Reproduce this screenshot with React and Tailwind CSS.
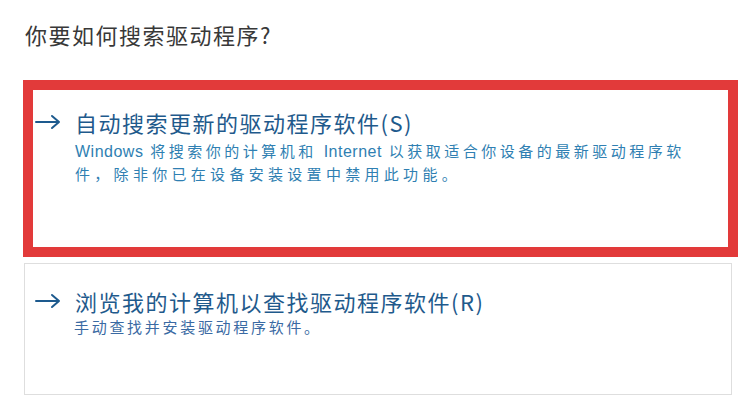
import React from "react";

const FONT = { fontFamily: '"Noto Sans CJK SC", "Noto Sans", sans-serif' };
const LATIN = { fontFamily: '"Liberation Sans", sans-serif' };

function Arrow() {
  return (
    <svg width="26" height="16" viewBox="0 0 26 16" className="shrink-0">
      <path d="M1 8 H24 M17 2 L24 8 L17 14" fill="none" stroke="#1d5a8e" strokeWidth="2" strokeLinecap="round" strokeLinejoin="round" />
    </svg>
  );
}

export default function App() {
  return (
    <div className="w-[751px] h-[417px] bg-white overflow-hidden" style={FONT}>
      <div className="pl-[25px] pt-[19px] text-[22px] leading-[30px] tracking-[1.5px] text-[#383838]">
        你要如何搜索驱动程序?
      </div>

      {/* highlighted option */}
      <div className="ml-[23px] mt-[31px] w-[715px] h-[177px] border-[10px] border-[#e23a3a] bg-white pt-[18px]">
        <div className="flex items-center gap-[14px] pl-[2px]">
          <Arrow />
          <div className="text-[22px] leading-[28px] tracking-[1.5px] text-[#1f5a8c]">自动搜索更新的驱动程序软件(S)</div>
        </div>
        <div className="pl-[42px] mt-[4px] text-[15px] leading-[22px] tracking-[3.5px] text-[#2f7fb2]">
          <span className="text-[16px] tracking-[0.5px]" style={LATIN}>Windows</span>{" "}
          将搜索你的计算机和{" "}
          <span className="text-[16px] tracking-[0.5px]" style={LATIN}>Internet</span>{" "}
          以获取适合你设备的最新驱动程序软
          <br />
          <span className="tracking-[4.3px]">件，除非你已在设备安装设置中禁用此功能。</span>
        </div>
      </div>

      <div className="ml-[24px] mt-[6px] w-[708px] h-[132px] border border-[#dedede] pt-[26px]">
        <div className="flex items-center gap-[14px] pl-[10px]">
          <Arrow />
          <div className="text-[22px] leading-[22px] tracking-[1.5px] text-[#1f5a8c]">浏览我的计算机以查找驱动程序软件(R)</div>
        </div>
        <div className="pl-[49px] mt-[6px] text-[15px] leading-[18px] tracking-[2.7px] text-[#3a6aa3]">
          手动查找并安装驱动程序软件。
        </div>
      </div>
    </div>
  );
}
